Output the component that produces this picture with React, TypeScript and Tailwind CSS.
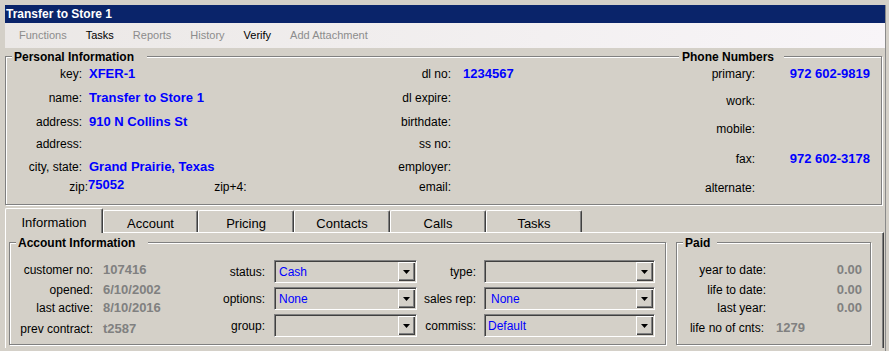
import React from "react";

function Combo({ value, w, pl }: { value?: string; w: string; pl: string }) {
  return (
    <div
      className={`flex h-[23px] ${w} border border-[#808080] border-r-white border-b-white bg-[#d4d0c8] p-[1px] shadow-[inset_1px_1px_0_#404040]`}
    >
      <div className={`flex-1 flex items-center ${pl} text-[12px] text-[#0000ff]`}>{value}</div>
      <div className="w-[17px] flex items-center justify-center bg-[#d4d0c8] shadow-[inset_1px_1px_0_#fff,inset_-1px_-1px_0_#404040,inset_-2px_-2px_0_#808080]">
        <svg width="7" height="4" viewBox="0 0 7 4" className="mt-[1px]">
          <path d="M0 0h7L3.5 4z" fill="#000" />
        </svg>
      </div>
    </div>
  );
}

function Tab({ label, w, selected }: { label: string; w: string; selected?: boolean }) {
  if (selected) {
    return (
      <div
        className={`${w} h-[25px] -mb-px relative z-10 flex items-start pt-[4px] justify-center bg-[#d4d0c8] border-t border-l border-white border-r border-r-[#404040] rounded-tl-[2px] rounded-tr-[2px] shadow-[inset_-1px_0_0_#808080] text-[13px]`}
      >
        {label}
      </div>
    );
  }
  return (
    <div
      className={`${w} h-[22px] flex items-start pt-[3px] justify-center bg-[#d4d0c8] border-t border-l border-white border-r border-r-[#404040] rounded-tl-[2px] rounded-tr-[2px] shadow-[inset_-1px_0_0_#808080] text-[13px]`}
    >
      {label}
    </div>
  );
}

const blue = "text-[#0000ff] font-bold text-[13px]";
const gray = "text-[#808080] font-bold text-[13px]";

export default function App() {
  const rowsA: { h: string; label: string; value?: string; mlabel: string; mvalue?: string }[] = [
    { h: "h-[24px]", label: "key:", value: "XFER-1", mlabel: "dl no:", mvalue: "1234567" },
    { h: "h-[24px]", label: "name:", value: "Transfer to Store 1", mlabel: "dl expire:" },
    { h: "h-[24px]", label: "address:", value: "910 N Collins St", mlabel: "birthdate:" },
    { h: "h-[20px]", label: "address:", mlabel: "ss no:" },
    { h: "h-[26px]", label: "city, state:", value: "Grand Prairie, Texas", mlabel: "employer:" },
  ];
  const phones: { h: string; label: string; value?: string }[] = [
    { h: "h-[24px]", label: "primary:", value: "972 602-9819" },
    { h: "h-[30px]", label: "work:" },
    { h: "h-[26px]", label: "mobile:" },
    { h: "h-[34px]", label: "fax:", value: "972 602-3178" },
    { h: "h-[24px]", label: "alternate:" },
  ];
  return (
    <div className="w-[889px] h-[351px] overflow-hidden bg-[#d4d0c8] font-['Liberation_Sans',Arial,sans-serif] text-[12px] text-black">
      <div className="flex h-full pt-[5px] pl-[5px] border-l-[3px] border-l-[#d4d0c8]">
        <div className="w-[881px] flex flex-col border-r border-r-[#8a8a8a] -ml-[3px]">
          {/* Title bar */}
          <div className="h-[18px] bg-[#0a246a] text-white font-bold text-[12px] flex items-center pl-[1px]">
            Transfer to Store 1
          </div>
          {/* Menu bar */}
          <div className="h-[25px] bg-gradient-to-r from-[#ebe8e6] to-[#f8f5f8] flex items-center gap-[19px] pl-[14px] text-[11px] text-[#8c8c8c]">
            <span>Functions</span>
            <span className="text-black">Tasks</span>
            <span>Reports</span>
            <span>History</span>
            <span className="text-black">Verify</span>
            <span>Add Attachment</span>
          </div>

          {/* Personal Information */}
          <div className="relative mt-[8px] w-[877px] h-[149px] border border-[#808080] shadow-[inset_1px_1px_0_#fff,1px_1px_0_#fff] flex">
            <span className="absolute left-[6px] -top-[9px] bg-[#d4d0c8] pl-[2px] pr-[13px] font-bold text-[12px]">
              Personal Information
            </span>
            <span className="absolute left-[673px] -top-[9px] bg-[#d4d0c8] pl-[3px] pr-[10px] font-bold text-[12px]">
              Phone Numbers
            </span>
            <div className="flex flex-col pt-[5px] w-[634px]">
              {rowsA.map((r, i) => (
                <div key={i} className={`${r.h} flex items-center`}>
                  <div className="w-[375px] flex items-center">
                    <span className="w-[76px] text-right">{r.label}</span>
                    <span className={`ml-[7px] ${blue}`}>{r.value}</span>
                  </div>
                  <div className="flex items-center">
                    <span className="w-[70px] text-right">{r.mlabel}</span>
                    <span className={`ml-[12px] ${blue}`}>{r.mvalue}</span>
                  </div>
                </div>
              ))}
              <div className="h-[14px] flex items-center">
                <div className="w-[375px] flex items-center">
                  <span className="w-[82px] text-right">zip:</span>
                  <span className={`${blue} -translate-y-[2px]`}>75052</span>
                  <span className="ml-[90px]">zip+4:</span>
                </div>
                <div className="flex items-center">
                  <span className="w-[70px] text-right">email:</span>
                </div>
              </div>
            </div>
            <div className="flex flex-col pt-[5px]">
              {phones.map((p, i) => (
                <div key={i} className={`${p.h} flex items-center`}>
                  <span className="w-[115px] text-right">{p.label}</span>
                  <span className={`w-[115px] text-right ${blue}`}>{p.value}</span>
                </div>
              ))}
            </div>
          </div>

          {/* Tabs */}
          <div className="mt-[3px] h-[24px] flex items-end">
            <Tab label="Information" w="w-[98px]" selected />
            <Tab label="Account" w="w-[95px]" />
            <Tab label="Pricing" w="w-[96px]" />
            <Tab label="Contacts" w="w-[96px]" />
            <Tab label="Calls" w="w-[96px]" />
            <Tab label="Tasks" w="w-[96px]" />
          </div>
          <div className="w-[879px] h-[116px] border-t border-l border-white border-r border-r-[#404040] shadow-[inset_-1px_0_0_#808080] pl-[3px] pt-[9px] flex gap-[10px]">
            {/* Account Information */}
            <div className="relative w-[657px] h-[103px] border border-[#808080] shadow-[inset_1px_1px_0_#fff,1px_1px_0_#fff] flex">
              <span className="absolute left-[6px] -top-[9px] bg-[#d4d0c8] pl-[2px] pr-[13px] font-bold text-[12px]">
                Account Information
              </span>
              <div className="w-[190px] flex flex-col pt-[16px]">
                {[
                  ["h-[22px]", "customer no:", "107416"],
                  ["h-[18px]", "opened:", "6/10/2002"],
                  ["h-[18px]", "last active:", "8/10/2016"],
                  ["h-[24px]", "prev contract:", "t2587"],
                ].map(([h, l, v], i) => (
                  <div key={i} className={`${h} flex items-center`}>
                    <span className="w-[83px] text-right">{l}</span>
                    <span className={`ml-[10px] ${gray}`}>{v}</span>
                  </div>
                ))}
              </div>
              <div className="w-[217px] flex flex-col pt-[17px] gap-[4px]">
                {[
                  ["status:", "Cash"],
                  ["options:", "None"],
                  ["group:", ""],
                ].map(([l, v], i) => (
                  <div key={i} className="flex items-center">
                    <span className="w-[65px] text-right mr-[9px]">{l}</span>
                    <Combo value={v} w="w-[143px]" pl="pl-[3px]" />
                  </div>
                ))}
              </div>
              <div className="w-[238px] flex flex-col pt-[17px] gap-[4px]">
                {[
                  ["type:", "", "pl-[3px]"],
                  ["sales rep:", "None", "pl-[5px]"],
                  ["commiss:", "Default", "pl-[2px]"],
                ].map(([l, v, p], i) => (
                  <div key={i} className="flex items-center">
                    <span className="w-[59px] text-right mr-[8px]">{l}</span>
                    <Combo value={v} w="w-[171px]" pl={p} />
                  </div>
                ))}
              </div>
            </div>
            {/* Paid */}
            <div className="relative w-[195px] h-[103px] border border-[#808080] shadow-[inset_1px_1px_0_#fff,1px_1px_0_#fff] flex flex-col pt-[16px]">
              <span className="absolute left-[6px] -top-[9px] bg-[#d4d0c8] pl-[2px] pr-[7px] font-bold text-[12px]">
                Paid
              </span>
              {[
                ["h-[22px]", "year to date:", "0.00"],
                ["h-[18px]", "life to date:", "0.00"],
                ["h-[18px]", "last year:", "0.00"],
              ].map(([h, l, v], i) => (
                <div key={i} className={`${h} flex items-center`}>
                  <span className="w-[89px] text-right">{l}</span>
                  <span className={`flex-1 text-right pr-[8px] ${gray}`}>{v}</span>
                </div>
              ))}
              <div className="h-[22px] flex items-center">
                <span className="w-[87px] text-right">life no of cnts:</span>
                <span className={`ml-[12px] ${gray}`}>1279</span>
              </div>
            </div>
          </div>
        </div>
      </div>
    </div>
  );
}
